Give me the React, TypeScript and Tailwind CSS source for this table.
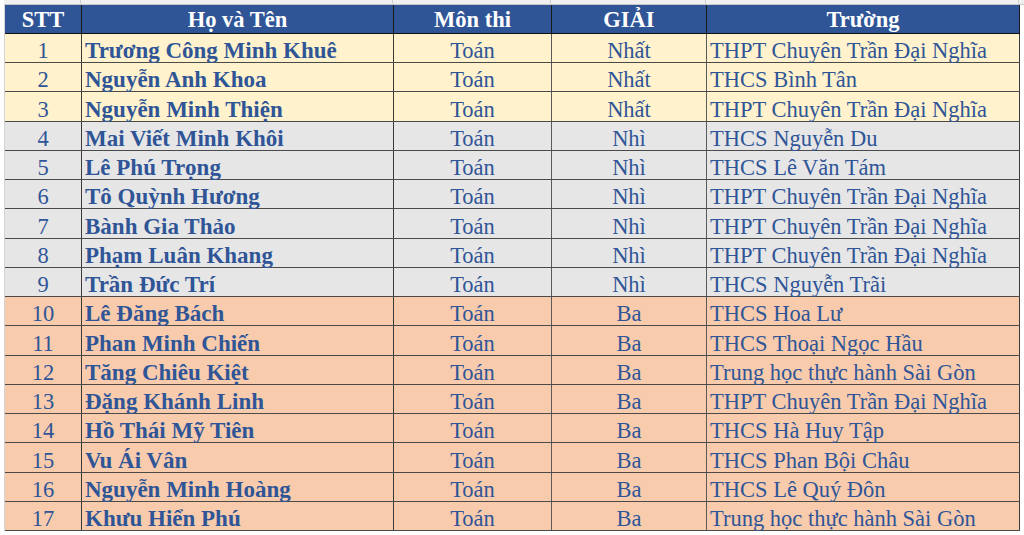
import React from 'react';

type Row = { stt: number; name: string; prize: string; school: string };

const rows: Row[] = [
    { stt: 1, name: 'Trương Công Minh Khuê', prize: 'Nhất', school: 'THPT Chuyên Trần Đại Nghĩa' },
    { stt: 2, name: 'Nguyễn Anh Khoa', prize: 'Nhất', school: 'THCS Bình Tân' },
    { stt: 3, name: 'Nguyễn Minh Thiện', prize: 'Nhất', school: 'THPT Chuyên Trần Đại Nghĩa' },
    { stt: 4, name: 'Mai Viết Minh Khôi', prize: 'Nhì', school: 'THCS Nguyễn Du' },
    { stt: 5, name: 'Lê Phú Trọng', prize: 'Nhì', school: 'THCS Lê Văn Tám' },
    { stt: 6, name: 'Tô Quỳnh Hương', prize: 'Nhì', school: 'THPT Chuyên Trần Đại Nghĩa' },
    { stt: 7, name: 'Bành Gia Thảo', prize: 'Nhì', school: 'THPT Chuyên Trần Đại Nghĩa' },
    { stt: 8, name: 'Phạm Luân Khang', prize: 'Nhì', school: 'THPT Chuyên Trần Đại Nghĩa' },
    { stt: 9, name: 'Trần Đức Trí', prize: 'Nhì', school: 'THCS Nguyễn Trãi' },
    { stt: 10, name: 'Lê Đăng Bách', prize: 'Ba', school: 'THCS Hoa Lư' },
    { stt: 11, name: 'Phan Minh Chiến', prize: 'Ba', school: 'THCS Thoại Ngọc Hầu' },
    { stt: 12, name: 'Tăng Chiêu Kiệt', prize: 'Ba', school: 'Trung học thực hành Sài Gòn' },
    { stt: 13, name: 'Đặng Khánh Linh', prize: 'Ba', school: 'THPT Chuyên Trần Đại Nghĩa' },
    { stt: 14, name: 'Hồ Thái Mỹ Tiên', prize: 'Ba', school: 'THCS Hà Huy Tập' },
    { stt: 15, name: 'Vu Ái Vân', prize: 'Ba', school: 'THCS Phan Bội Châu' },
    { stt: 16, name: 'Nguyễn Minh Hoàng', prize: 'Ba', school: 'THCS Lê Quý Đôn' },
    { stt: 17, name: 'Khưu Hiển Phú', prize: 'Ba', school: 'Trung học thực hành Sài Gòn' },
];

const cols = 'grid grid-cols-[77px_312px_158px_155px_313px]';

function rowBg(prize: string) {
    if (prize === 'Nhất') return 'bg-[#fff2cc]';
    if (prize === 'Nhì') return 'bg-[#e7e6e6]';
    return 'bg-[#f8cbad]';
}

export default function App() {
    return (
        <div className="w-[1024px] h-[535px] overflow-hidden bg-white font-['Liberation_Serif',serif] text-[22.5px]">
            {/* Sheet row above the table */}
            <div className={cn(cols, 'h-[5px] ml-[4px] bg-[#f0f0f0] border-b border-[#c8c8c8]')}>
                <div className="border-r border-[#d0d0d0]" />
                <div className="border-r border-[#d0d0d0]" />
                <div className="border-r border-[#d0d0d0]" />
                <div className="border-r border-[#d0d0d0]" />
                <div className="border-r border-[#d0d0d0]" />
            </div>

            <div className="ml-[4px] border-l border-[#d4d4d4] w-[1016px]">
                {/* Header */}
                <div className={cn(cols, 'h-[29px] bg-[#2f5597] text-white font-bold border-b border-[#111]')}>
                    <div className="flex items-end justify-center pb-[1px] leading-[24px] border-r border-[#1a1a1a]">STT</div>
                    <div className="flex items-end justify-center pb-[1px] leading-[24px] border-r border-[#1a1a1a]">Họ và Tên</div>
                    <div className="flex items-end justify-center pb-[1px] leading-[24px] border-r border-[#1a1a1a]">Môn thi</div>
                    <div className="flex items-end justify-center pb-[1px] leading-[24px] border-r border-[#1a1a1a]">GIẢI</div>
                    <div className="flex items-end justify-center pb-[1px] leading-[24px] border-r border-[#1a1a1a]">Trường</div>
                </div>

                {/* Body */}
                {rows.map((r, i) => (
                    <div key={r.stt}
                        className={cn(cols, rowBg(r.prize), i % 4 === 2 ? 'h-[30px]' : 'h-[29px]', 'border-b border-[#4a4a4a] text-[#2f5597]')}>
                        <div className="flex items-end justify-center leading-[22px] border-r border-[#3a3a3a]">{r.stt}</div>
                        <div className="flex items-end pl-[3px] leading-[22px] text-[23px] font-bold whitespace-nowrap border-r border-[#3a3a3a]">{r.name}</div>
                        <div className="flex items-end justify-center leading-[22px] border-r border-[#5a5a5a]">Toán</div>
                        <div className="flex items-end justify-center leading-[22px] border-r border-[#5a5a5a]">{r.prize}</div>
                        <div className="flex items-end pl-[3px] leading-[22px] whitespace-nowrap border-r border-[#3a3a3a]">{r.school}</div>
                    </div>
                ))}
            </div>
        </div>
    );
}

function cn(...parts: (string | false | undefined)[]) {
    return parts.filter(Boolean).join(' ');
}
